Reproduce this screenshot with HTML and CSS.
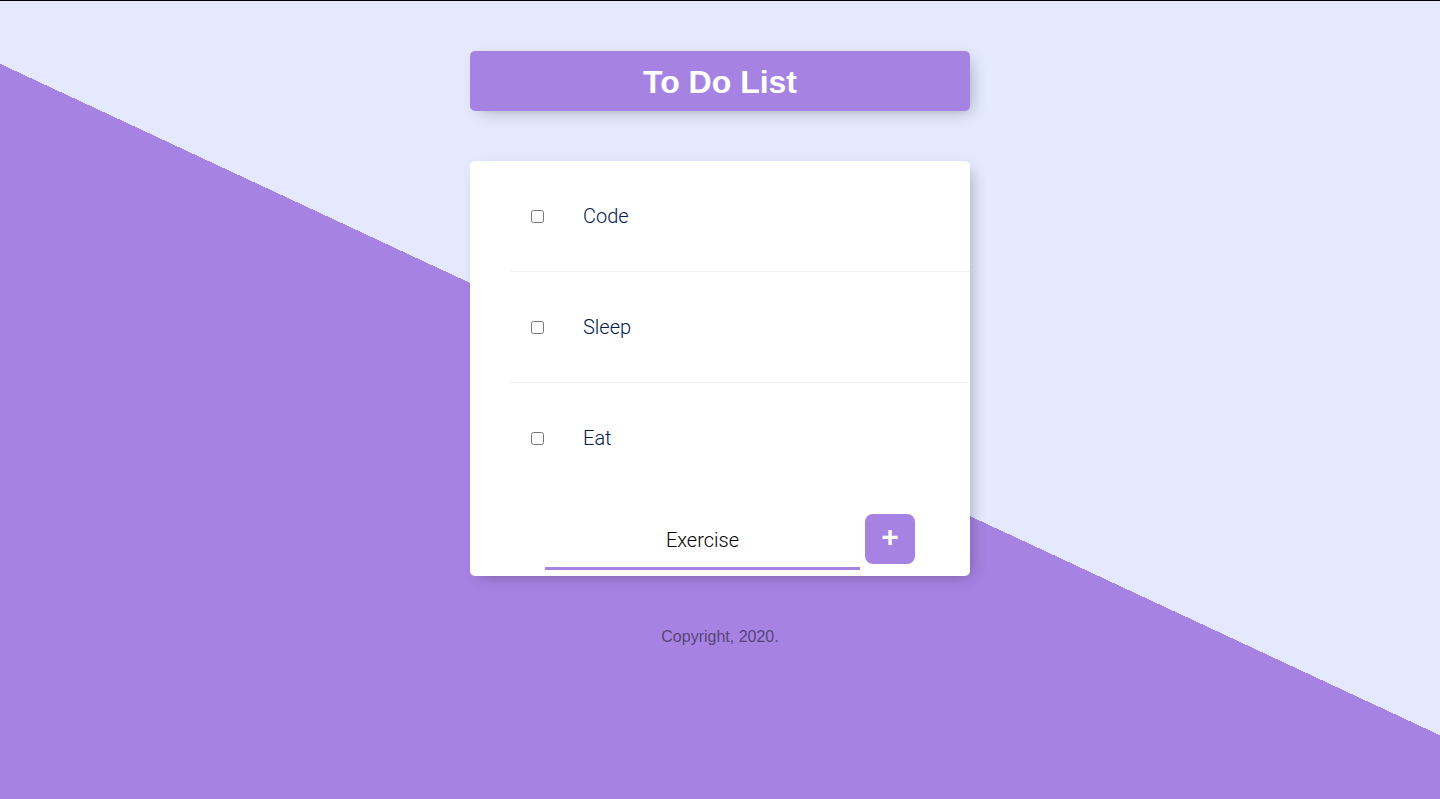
FILE: index.html
```html
<!DOCTYPE html>
<html lang="en">
<head>
<meta charset="utf-8">
<title>To Do List</title>
<link rel="stylesheet" href="styles.css">
</head>
<body>
  <div class="page">
    <div class="heading">
      <h1>To Do List</h1>
    </div>
    <div class="card">
      <div class="list">
        <div class="item"><input type="checkbox" class="check"><p>Code</p></div>
        <div class="item"><input type="checkbox" class="check"><p>Sleep</p></div>
        <div class="item"><input type="checkbox" class="check"><p>Eat</p></div>
      </div>
      <form class="add-form">
        <input type="text" class="new-item" value="Exercise">
        <button type="button" class="add-btn">+</button>
      </form>
    </div>
    <footer class="footer">Copyright, 2020.</footer>
  </div>
</body>
</html>
```

FILE: styles.css
```css
html {
  height: 100%;
  background-color: #E4E9FD;
  background-image: linear-gradient(25deg, #A683E3 50%, #E4E9FD 50%);
  background-repeat: no-repeat;
  background-size: 100% 100%;
}

body {
  margin: 0;
  height: 100%;
  box-sizing: border-box;
  border-top: 1px solid #000;
  overflow: hidden;
  font-family: "Liberation Sans", Arial, sans-serif;
}

.page {
  padding-top: 50px;
  display: flex;
  flex-direction: column;
  align-items: center;
}

.heading {
  width: 500px;
  height: 60px;
  background-color: #A683E3;
  border-radius: 5px;
  box-shadow: 5px 5px 15px -5px rgba(0, 0, 0, 0.3);
  display: flex;
  align-items: center;
  justify-content: center;
}

.heading h1 {
  margin: 0;
  color: #fff;
  font-size: 32px;
  font-weight: 700;
  line-height: 1;
  padding-top: 1px;
}

.card {
  width: 500px;
  margin-top: 50px;
  background: #fff;
  border-radius: 5px;
  box-shadow: 5px 5px 15px -5px rgba(0, 0, 0, 0.3);
}

.list {
  padding-left: 40px;
}

.item {
  height: 110px;
  display: flex;
  align-items: center;
  border-bottom: 1px solid #F1F1F1;
}

.item:last-child {
  border-bottom: 0;
}

.check {
  width: 13px;
  height: 13px;
  margin: 0 19px 0 21px;
}

.item p {
  margin: 0;
  padding: 0 20px;
  font-family: Roboto, "Liberation Sans", sans-serif;
  font-size: 20px;
  font-weight: 300;
  color: #00204a;
}

.add-form {
  display: flex;
  align-items: flex-start;
  padding: 17px 0 6px 75px;
}

.new-item {
  width: 315px;
  height: 60px;
  box-sizing: border-box;
  border: none;
  background: transparent;
  outline: none;
  text-align: center;
  font-family: Roboto, "Liberation Sans", sans-serif;
  font-size: 20px;
  font-weight: 300;
  color: #000;
  box-shadow: inset 0 -3px 0 0 #A683E3;
  padding: 0;
}

.add-btn {
  width: 50px;
  height: 50px;
  margin: 4px 0 0 5px;
  border: 0;
  border-radius: 8px;
  background-color: #A683E3;
  color: #fff;
  font-family: "Liberation Sans", Arial, sans-serif;
  font-size: 30px;
  line-height: 1;
  padding: 0 0 4px;
  font-weight: 700;
}

.footer {
  margin-top: 52px;
  font-size: 16px;
  color: rgba(0, 0, 0, 0.5);
  text-align: center;
}
```
